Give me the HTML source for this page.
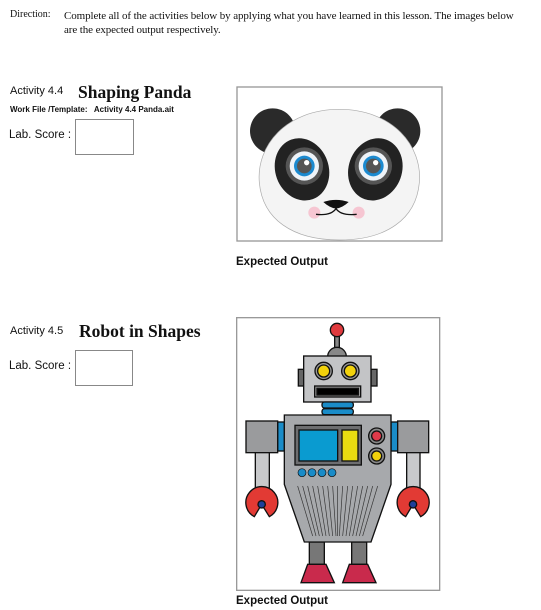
<!DOCTYPE html>
<html><head><meta charset="utf-8"><style>
body{margin:0;width:541px;height:610px;background:#fff;position:relative;overflow:hidden;font-family:"Liberation Sans",sans-serif;color:#111}
.a{position:absolute;white-space:nowrap}
.serif{font-family:"Liberation Serif",serif}
.box{position:absolute;border:1px solid #888;background:#fff}
</style></head><body>
<div class="a serif" style="left:10px;top:9px;font-size:10px">Direction:</div>
<div class="a serif" style="left:64px;top:9px;font-size:11px;line-height:14px;letter-spacing:-0.1px">Complete all of the activities below by applying what you have learned in this lesson. The images below<br>are the expected output respectively.</div>

<div class="a" style="left:10px;top:85px;font-size:11px">Activity 4.4</div>
<div class="a serif" style="left:78px;top:82px;font-size:17.5px;font-weight:bold">Shaping Panda</div>
<div class="a" style="left:10px;top:105px;font-size:8px;font-weight:bold">Work File /Template:&nbsp;&nbsp; Activity 4.4 Panda.ait</div>
<div class="a" style="left:9px;top:129px;font-size:11.5px">Lab. Score :</div>
<div class="box" style="left:75px;top:119px;width:57px;height:34px"></div>

<div class="a" style="left:10px;top:325px;font-size:11px">Activity 4.5</div>
<div class="a serif" style="left:79px;top:321px;font-size:17.5px;font-weight:bold">Robot in Shapes</div>
<div class="a" style="left:9px;top:360px;font-size:11.5px">Lab. Score :</div>
<div class="box" style="left:75px;top:350px;width:56px;height:34px"></div>

<div class="a" style="left:236px;top:256px;font-size:11.5px;font-weight:bold">Expected Output</div>
<div class="a" style="left:236px;top:595px;font-size:11.5px;font-weight:bold">Expected Output</div>

<svg class="a" style="left:236px;top:86px" width="210" height="166" viewBox="0 0 630 498">
<rect x="3" y="3" width="615" height="462" fill="#fff" stroke="#999" stroke-width="4"/>
<circle cx="110" cy="135" r="68" fill="#2a2a2a"/>
<circle cx="485" cy="135" r="68" fill="#2a2a2a"/>
<path d="M310 70 C470 70 560 180 550 290 C540 400 450 462 310 462 C170 462 80 400 70 290 C60 180 150 70 310 70Z" fill="#f4f4f4" stroke="#aaa" stroke-width="2"/>
<ellipse cx="198" cy="250" rx="80" ry="95" fill="#222" transform="rotate(-20 198 250)"/>
<ellipse cx="418" cy="250" rx="80" ry="95" fill="#222" transform="rotate(20 418 250)"/>
<circle cx="205" cy="240" r="56" fill="#555"/>
<circle cx="412" cy="240" r="56" fill="#555"/>
<circle cx="205" cy="240" r="44" fill="#eef3f8"/>
<circle cx="412" cy="240" r="44" fill="#eef3f8"/>
<circle cx="205" cy="240" r="31" fill="#1b8ad0"/>
<circle cx="412" cy="240" r="31" fill="#1b8ad0"/>
<circle cx="205" cy="240" r="22" fill="#555"/>
<circle cx="412" cy="240" r="22" fill="#555"/>
<circle cx="212" cy="230" r="8" fill="#fff"/>
<circle cx="419" cy="230" r="8" fill="#fff"/>
<circle cx="235" cy="380" r="18" fill="#f6c6d2"/>
<circle cx="368" cy="380" r="18" fill="#f6c6d2"/>
<path d="M262 348 Q300 335 338 348 Q320 365 300 368 Q280 365 262 348Z" fill="#111"/>
<path d="M240 385 Q285 390 300 368 Q315 390 362 385" fill="none" stroke="#111" stroke-width="4"/>
</svg>

<svg class="a" style="left:236px;top:316px" width="206" height="280" viewBox="0 0 618 840">
<rect x="2" y="5" width="609" height="818" fill="#fff" stroke="#999" stroke-width="4"/>
<g stroke="#111" stroke-width="4">
<rect x="296" y="60" width="14" height="45" fill="#888"/>
<circle cx="303" cy="42" r="20" fill="#e03a3e"/>
<path d="M275 122 A28 28 0 0 1 331 122Z" fill="#888"/>
<rect x="187" y="160" width="18" height="50" fill="#666"/>
<rect x="405" y="160" width="18" height="50" fill="#666"/>
<rect x="203" y="120" width="202" height="138" fill="#c3c4c6"/>
<circle cx="263" cy="165" r="26" fill="#999"/>
<circle cx="343" cy="165" r="26" fill="#999"/>
<circle cx="263" cy="165" r="18" fill="#f2d20c"/>
<circle cx="343" cy="165" r="18" fill="#f2d20c"/>
<rect x="236" y="210" width="138" height="33" fill="#999"/>
<rect x="243" y="217" width="124" height="20" fill="#000"/>
<rect x="258" y="258" width="94" height="18" rx="8" fill="#1a8cc8"/>
<rect x="258" y="278" width="94" height="18" rx="8" fill="#1a8cc8"/>
<rect x="125" y="318" width="20" height="87" fill="#1a8cc8"/>
<rect x="465" y="318" width="20" height="87" fill="#1a8cc8"/>
<rect x="30" y="315" width="95" height="95" fill="#9a9b9d"/>
<rect x="485" y="315" width="93" height="95" fill="#9a9b9d"/>
<rect x="58" y="410" width="42" height="110" fill="#c8c9cb"/>
<rect x="512" y="410" width="40" height="110" fill="#c8c9cb"/>
<path d="M55 602 A48 48 0 1 1 100 602 L77 565Z" fill="#e23a34"/>
<path d="M509 602 A48 48 0 1 1 554 602 L531 565Z" fill="#e23a34"/>
<circle cx="77" cy="565" r="11" fill="#1e3f9a"/>
<circle cx="531" cy="565" r="11" fill="#1e3f9a"/>
<rect x="220" y="678" width="45" height="67" fill="#777"/>
<rect x="347" y="678" width="45" height="67" fill="#777"/>
<path d="M195 800 L215 745 L270 745 L295 800Z" fill="#c92a4c"/>
<path d="M320 800 L340 745 L395 745 L420 800Z" fill="#c92a4c"/>
<path d="M145 297 L465 297 L465 505 L405 678 L205 678 L145 505Z" fill="#a7a9ac"/>
<rect x="177" y="328" width="199" height="119" fill="#6d6e70"/>
<rect x="189" y="342" width="116" height="93" fill="#0a9bd0"/>
<rect x="318" y="342" width="48" height="93" fill="#e8dc10"/>
<circle cx="422" cy="360" r="24" fill="#888"/>
<circle cx="422" cy="420" r="24" fill="#888"/>
<circle cx="422" cy="360" r="15" fill="#e03a4a"/>
<circle cx="422" cy="420" r="15" fill="#f2d20c"/>
</g>
<g fill="#1a8cc8" stroke="#111" stroke-width="2">
<circle cx="198" cy="470" r="12"/><circle cx="228" cy="470" r="12"/><circle cx="258" cy="470" r="12"/><circle cx="288" cy="470" r="12"/>
</g>
<g stroke="#333" stroke-width="2">
<line x1="185" y1="510" x2="230" y2="660"/><line x1="200" y1="510" x2="240" y2="660"/><line x1="215" y1="510" x2="250" y2="660"/><line x1="230" y1="510" x2="260" y2="660"/><line x1="245" y1="510" x2="270" y2="660"/><line x1="260" y1="510" x2="280" y2="660"/><line x1="275" y1="510" x2="290" y2="660"/><line x1="290" y1="510" x2="300" y2="660"/><line x1="305" y1="510" x2="305" y2="660"/><line x1="320" y1="510" x2="310" y2="660"/><line x1="335" y1="510" x2="320" y2="660"/><line x1="350" y1="510" x2="330" y2="660"/><line x1="365" y1="510" x2="340" y2="660"/><line x1="380" y1="510" x2="350" y2="660"/><line x1="395" y1="510" x2="360" y2="660"/><line x1="410" y1="510" x2="370" y2="660"/><line x1="425" y1="510" x2="380" y2="660"/>
</g>
</svg>
</body></html>
